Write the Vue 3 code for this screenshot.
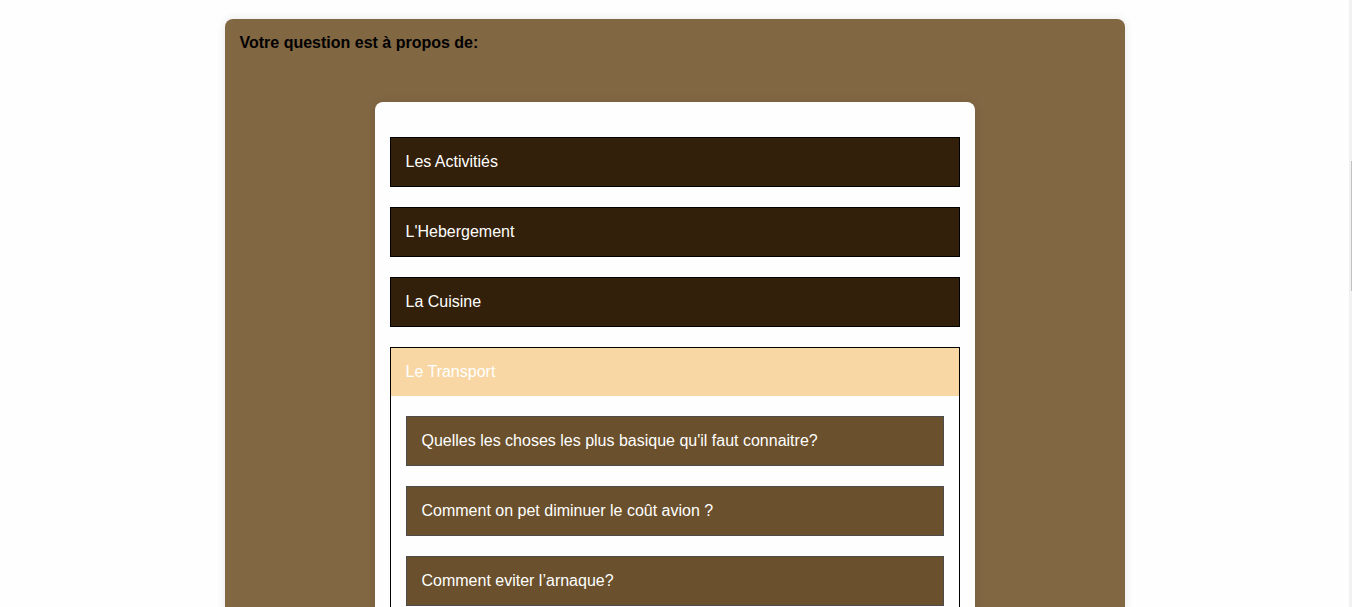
<script setup>
import { ref } from 'vue'

const open = ref('Le Transport')
const topics = [
  { name: 'Les Activitiés', questions: [] },
  { name: "L'Hebergement", questions: [] },
  { name: 'La Cuisine', questions: [] },
  {
    name: 'Le Transport',
    questions: [
      "Quelles les choses les plus basique qu'il faut connaitre?",
      'Comment on pet diminuer le coût avion ?',
      'Comment eviter l’arnaque?'
    ]
  }
]

function toggle(name) {
  open.value = open.value === name ? '' : name
}
</script>

<template>
  <div class="page">
    <main class="panel">
      <h1 class="title">Votre question est à propos de:</h1>
      <div class="card">
        <section v-for="t in topics" :key="t.name" class="topic">
          <button
            type="button"
            class="head"
            :class="{ active: open === t.name }"
            :aria-expanded="open === t.name"
            @click="toggle(t.name)"
          >{{ t.name }}</button>
          <div v-if="open === t.name" class="questions">
            <button v-for="q in t.questions" :key="q" type="button" class="question">{{ q }}</button>
          </div>
        </section>
      </div>
    </main>
    <div class="track" aria-hidden="true"><div class="thumb"></div></div>
  </div>
</template>

<style>
body {
  margin: 0;
  background: #fefefe;
}
</style>

<style scoped>
.page {
  position: relative;
  box-sizing: border-box;
  height: 100vh;
  overflow: hidden;
  padding: 19px 3px 0 0;
  font-family: "Liberation Sans", Arial, sans-serif;
  font-size: 16px;
  line-height: 18px;
}
.panel {
  box-sizing: border-box;
  max-width: 900px;
  margin: 0 auto;
  padding: 15px 15px 50px;
  border-radius: 8px;
  background: #826743;
  box-shadow: 0 0 10px rgba(0, 0, 0, 0.1);
}
.title {
  margin: 0 0 50px;
  font-size: 16px;
  font-weight: bold;
  color: #000;
}
.card {
  box-sizing: border-box;
  max-width: 600px;
  margin: 0 auto;
  padding: 35px 15px;
  border-radius: 8px;
  background: #fefefe;
  box-shadow: 0 0 10px rgba(0, 0, 0, 0.1);
  display: flex;
  flex-direction: column;
  gap: 20px;
}
.topic {
  border: 1px solid #000;
}
.head,
.question {
  display: block;
  box-sizing: border-box;
  width: 100%;
  margin: 0;
  padding: 15px;
  border: 0;
  font: inherit;
  color: #fff;
  text-align: left;
  cursor: pointer;
}
.head {
  background: #33200a;
}
.head.active {
  background: #f8d7a4;
}
.questions {
  display: flex;
  flex-direction: column;
  gap: 20px;
  padding: 20px 15px;
}
.question {
  border: 1px solid #4c4c4c;
  background: #6a502c;
}
.track {
  position: absolute;
  top: 0;
  right: 0;
  bottom: 0;
  display: flow-root;
  width: 3px;
  background: #f1f1f1;
}
.thumb {
  width: 1px;
  height: 130px;
  margin: 161px 0 0 auto;
  background: #c1c1c1;
}
</style>
